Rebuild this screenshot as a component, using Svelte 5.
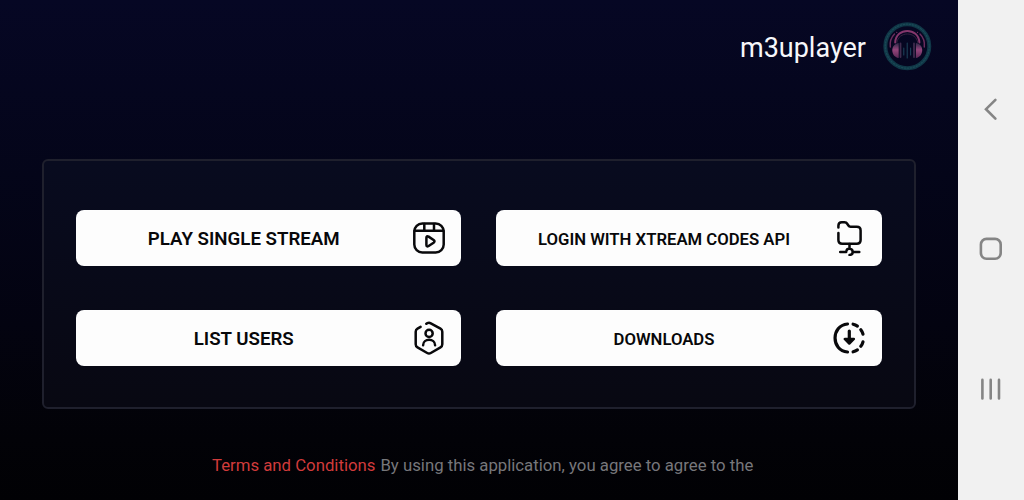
<script lang="ts">
  type Action = {
    id: string;
    label: string;
    compact?: boolean;
  };

  const actions: Action[] = [
    { id: "stream", label: "PLAY SINGLE STREAM" },
    { id: "xtream", label: "LOGIN WITH XTREAM CODES API", compact: true },
    { id: "users", label: "LIST USERS" },
    { id: "downloads", label: "DOWNLOADS", compact: true },
  ];
</script>

<div class="device">
  <main class="screen">
    <header>
      <h1>m3uplayer</h1>
      <svg class="logo" viewBox="0 0 50 50" fill="none" stroke-linecap="round" aria-hidden="true">
        <defs>
          <linearGradient id="cup" x1="0" y1="0" x2="0" y2="1">
            <stop offset="0" stop-color="#2d2947" />
            <stop offset="0.45" stop-color="#94457b" />
            <stop offset="1" stop-color="#5a2855" />
          </linearGradient>
        </defs>
        <circle cx="25.3" cy="25.2" r="22" stroke="#103747" stroke-width="4" />
        <circle cx="25.3" cy="25.2" r="22" stroke="#1a4956" stroke-width="1.3" stroke-dasharray="1.2 1.8" />
        <path d="M13.2 21.5C14 6 36.6 6 37.4 21.5" stroke="#84376c" stroke-width="2" />
        <path d="M14.8 21.5C16.5 10 34 10 35.8 21.5" stroke="#34203f" stroke-width="1" />
        <path d="M8.3 26C7.5 20 9.5 16 12.5 13M42.3 26C43 20 41 16 38 13" stroke="#6c2d5d" stroke-width="1.4" />
        <path d="M14.7 11.3h.1M35.5 11.3h.1" stroke="#793064" stroke-width="1.2" />
        <path d="M16.7 22c-9 1-8 14 0 15ZM33.9 22c9 1 8 14 0 15Z" fill="url(#cup)" />
        <path d="M18.5 22.5v13.5M32 22.5v13.5" stroke="#3f2b4d" stroke-width="1.8" />
        <path d="M21.8 27v7M25.2 22v15M28.6 27v7" stroke="#1c4057" stroke-width="1.1" />
      </svg>
    </header>

    <section class="panel">
      {#each actions as action (action.id)}
        <button class="action" class:compact={action.compact} type="button">
          <span>{action.label}</span>
          <svg class="icon" viewBox="0 0 36 36" aria-hidden="true">
            {#if action.id === "stream"}
              <rect x="3.3" y="3.5" width="29.4" height="29" rx="8" />
              <path d="M3.5 10.8h29M13.3 4v6.5M23 4v6.5" />
              <path d="M15.4 17.7v7q0 2.5 2.2 1.3l5-3.3q1.8-1.4 0-2.7l-5-3.4q-2.2-1.2-2.2 1.1Z" />
            {:else if action.id === "xtream"}
              <path d="M7.4 7.4V5.8Q7.4 2.3 10.8 2.3h2.6q2 0 3 1.7l1 1.5q.7 1.2 2.2 1.2h6.2q3.8 0 3.8 3.7v9.7q0 3.7-3.8 3.7H11.2q-3.8 0-3.8-3.7V13" />
              <path d="M18.5 24v4.3M9.2 32h6M22 32h6.3M15.4 31.2C15.8 27.9 21.6 27.9 21.7 32c0 2.1-1.8 2.9-3.2 2.9" />
            {:else if action.id === "users"}
              <path d="M15.2 3.8l1.2-.6q1.7-.8 3.4.1l9.7 5.4q1.8 1 1.8 3.1v12.5q0 2.1-1.8 3.1l-9.7 5.6q-1.8 1-3.6 0l-9.7-5.6q-1.8-1-1.8-3.1V11.8q0-2.1 1.8-3.1l3.1-1.8" />
              <circle cx="18.1" cy="13.4" r="3.6" />
              <path d="M12.1 25.2c.1-7.2 11.9-7.2 12 0" />
            {:else}
              <g class="heavy">
                <path d="M16.5 4C-.1 5.5-.1 30.5 16.5 32M22.1 4.2q2.4.6 4.3 1.9M29.8 9.8q1.6 2 2.2 4.4M32 21.8q-.6 2.4-2.2 4.5M26.4 29.9q-2 1.3-4.3 1.9M18.3 11v9" />
                <path class="solid" d="M13.7 19h9.2l-4.6 4.6Z" />
              </g>
            {/if}
          </svg>
        </button>
      {/each}
    </section>

    <footer>
      <a href="#terms">Terms and Conditions</a>
      <span>By using this application, you agree to agree to the</span>
    </footer>
  </main>

  <nav aria-label="System navigation">
    <button type="button" aria-label="Back">
      <svg viewBox="0 0 28 28"><path d="M18.4 4.8 9 14.2l9.4 9.4" /></svg>
    </button>
    <button type="button" aria-label="Home">
      <svg viewBox="0 0 28 28"><rect x="3.9" y="3.9" width="19.8" height="19.8" rx="5.6" /></svg>
    </button>
    <button type="button" aria-label="Recent apps">
      <svg viewBox="0 0 28 28"><path d="M5.4 4.9v18.6M13.7 4.9v18.6M22 4.9v18.6" /></svg>
    </button>
  </nav>
</div>

<style>
  :global(body) {
    margin: 0;
  }
  .device {
    display: flex;
    width: 1024px;
    height: 500px;
    overflow: hidden;
    font-family: Roboto, "Liberation Sans", sans-serif;
    background: #f1f1f1;
  }
  .screen {
    display: flex;
    flex-direction: column;
    box-sizing: border-box;
    width: 957.5px;
    padding: 20px 26px 0 41.5px;
    background: linear-gradient(#060724, #040519 35%, #030310 65%, #020207 88%, #010104);
  }
  header {
    display: flex;
    align-items: center;
    justify-content: flex-end;
    gap: 15.5px;
    height: 52px;
  }
  h1 {
    margin: 0;
    padding-top: 3px;
    color: #f7f7fa;
    font-size: 27px;
    font-weight: 400;
  }
  .logo {
    width: 50px;
    height: 50px;
  }
  .panel {
    display: grid;
    grid-template-columns: 385.5px 385.5px;
    grid-auto-rows: 56px;
    gap: 44px 35px;
    box-sizing: border-box;
    width: 874.5px;
    height: 250px;
    margin-top: 86.5px;
    padding: 49.5px 32px;
    border: 2px solid #1f202d;
    border-radius: 6px;
    background: linear-gradient(#080b1f, #080812);
  }
  button {
    border: 0;
    padding: 0;
    font-family: inherit;
  }
  .action {
    display: flex;
    align-items: center;
    padding: 0 14px 0 0;
    border-radius: 8px;
    background: #fdfdfd;
    color: #08080a;
    font-size: 18.7px;
    font-weight: 600;
  }
  .action span {
    flex: 1;
    padding: 2px 0 0 1px;
    text-align: center;
  }
  .compact {
    padding-right: 14.5px;
    font-size: 16.7px;
  }
  .icon {
    width: 36px;
    height: 36px;
    fill: none;
    stroke: #09090b;
    stroke-width: 2.5;
    stroke-linecap: round;
    stroke-linejoin: round;
  }
  .heavy {
    stroke-width: 3.2;
  }
  .solid {
    fill: #09090b;
    stroke-width: 2.4;
  }
  footer {
    display: flex;
    gap: 5px;
    margin-top: 46px;
    padding-left: 170.5px;
    color: #77777b;
    font-size: 16.75px;
    line-height: 20px;
    white-space: nowrap;
  }
  a {
    color: #d13b3b;
    text-decoration: none;
  }
  nav {
    display: flex;
    flex: 1;
    flex-direction: column;
    align-items: center;
    justify-content: space-between;
    padding: 95px 0 97px;
  }
  nav button {
    width: 28px;
    height: 28px;
    background: none;
  }
  nav svg {
    display: block;
    fill: none;
    stroke: #858585;
    stroke-width: 2.6;
    stroke-linecap: round;
  }
</style>
